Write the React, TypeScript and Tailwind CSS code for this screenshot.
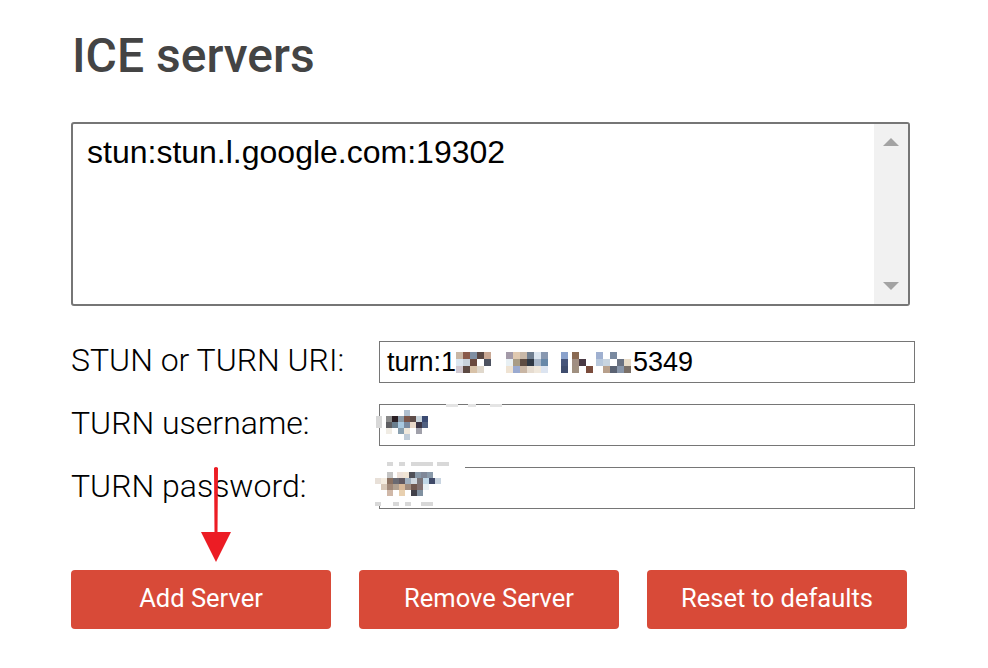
import React from "react";

type Cell = [number, number, number, number, string];

function Mosaic({ w, h, cells }: { w: number; h: number; cells: Cell[] }) {
  return (
    <svg width={w} height={h} viewBox={`0 0 ${w} ${h}`} className="block">
      {cells.map(([x, y, cw, ch, c], i) => (
        <rect key={i} x={x} y={y} width={cw} height={ch} fill={c} />
      ))}
    </svg>
  );
}

const uriCells: Cell[] = [
  [0, 0, 7, 7, "#c9b7a5"], [7, 0, 7, 7, "#8a5a4a"], [14, 7, 7, 7, "#6b4a3e"], [21, 0, 7, 7, "#5a4844"], [28, 0, 7, 7, "#c9a894"],
  [0, 7, 7, 7, "#dbe6f0"], [7, 7, 7, 7, "#c7d2dc"], [14, 0, 7, 7, "#7f8fa3"], [28, 7, 7, 7, "#4d5260"], [7, 14, 7, 7, "#5c4a43"], [14, 14, 7, 7, "#d8c2a8"],
  [21, 14, 7, 7, "#e0d8cc"], [0, 14, 7, 7, "#d0c8d0"],
  [50, 0, 7, 7, "#a39aa8"], [57, 0, 7, 7, "#e0c9b0"], [64, 0, 7, 7, "#c8b8a8"], [71, 0, 7, 7, "#6f7e90"], [78, 0, 7, 7, "#dce6f0"], [85, 0, 7, 7, "#8898b0"],
  [50, 7, 7, 7, "#e8f0f4"], [57, 7, 7, 7, "#a89c86"], [64, 7, 7, 7, "#5e4c42"], [71, 7, 7, 7, "#2f3844"], [78, 7, 7, 7, "#a8b6c8"], [85, 7, 7, 7, "#6888a8"],
  [50, 14, 7, 7, "#efe3d3"], [57, 14, 7, 7, "#9aaad0"], [64, 14, 7, 7, "#c9b6a4"], [71, 14, 7, 7, "#e6dcd0"], [78, 14, 7, 7, "#f0e8dc"], [85, 14, 7, 7, "#dce4f0"],
  [105, 0, 7, 7, "#8aa2cc"], [105, 7, 7, 7, "#46557a"], [105, 14, 7, 7, "#3f4d6e"],
  [116, 0, 7, 7, "#8a6a52"], [116, 7, 7, 7, "#a08e82"], [123, 7, 7, 7, "#4a3a44"], [130, 14, 7, 7, "#7a4c3c"], [116, 14, 7, 7, "#a09080"],
  [140, 0, 7, 7, "#9fb0d0"], [140, 7, 7, 7, "#b8c8dc"], [147, 7, 7, 7, "#c8d4e0"], [154, 0, 7, 7, "#7a8aa0"], [154, 14, 7, 7, "#5a6272"],
  [147, 14, 7, 7, "#b8a08c"], [161, 7, 7, 7, "#6a7282"], [161, 14, 7, 7, "#8896aa"], [168, 7, 7, 7, "#e8dcc8"], [168, 14, 7, 7, "#7a7068"],
];

const userCells: Cell[] = [
  [0, 12, 6, 12, "#d8d8d8"], [10, 12, 6, 6, "#8a8a8a"], [16, 12, 6, 6, "#2a1e24"], [22, 12, 6, 6, "#8a9aa8"], [28, 12, 6, 6, "#7a5448"],
  [34, 12, 6, 6, "#5e4c48"], [40, 12, 6, 6, "#c8d4dc"], [46, 12, 6, 6, "#3a4a72"], [10, 18, 6, 6, "#5e5e62"], [16, 18, 6, 6, "#6a7e8e"],
  [22, 18, 6, 6, "#a8c8e0"], [28, 18, 6, 6, "#7a8aa0"], [34, 18, 6, 6, "#e8d8c8"], [40, 18, 6, 6, "#3a3444"], [46, 18, 6, 6, "#506080"],
  [10, 24, 6, 6, "#f0ece4"], [22, 24, 6, 6, "#8aa0b0"], [28, 24, 6, 6, "#f0e8dc"], [40, 24, 6, 6, "#a0a0aa"], [28, 6, 6, 6, "#b0c0d0"],
  [28, 30, 6, 6, "#c0ccd8"], [70, 0, 12, 3, "#e4e4e4"], [92, 0, 8, 3, "#e4e4e4"], [114, 0, 12, 3, "#e4e4e4"],
];

const passCells: Cell[] = [
  [12, 0, 6, 4, "#d8d8d8"], [24, 0, 6, 4, "#d8d8d8"], [36, 0, 22, 4, "#d8d8d8"], [62, 0, 12, 4, "#d8d8d8"],
  [12, 10, 6, 6, "#c4c4c4"], [22, 10, 6, 6, "#ece0d8"], [28, 10, 6, 6, "#f0e4d4"], [34, 10, 6, 6, "#505058"], [40, 10, 6, 6, "#8898a8"],
  [46, 10, 6, 6, "#808898"], [52, 10, 6, 6, "#8a9aaa"], [0, 16, 6, 6, "#e8e0d8"], [6, 16, 6, 6, "#f4ece0"], [12, 16, 6, 6, "#8a7060"],
  [18, 16, 6, 6, "#6a6a72"], [24, 16, 6, 6, "#605860"], [30, 16, 6, 6, "#a0b0c0"], [36, 16, 6, 6, "#d0d8e0"], [42, 16, 6, 6, "#7a7478"],
  [48, 16, 6, 6, "#c0d8e8"], [54, 16, 6, 6, "#404a68"], [60, 16, 6, 6, "#c8d4e0"], [6, 22, 6, 6, "#d8c8b8"], [12, 22, 6, 6, "#a08878"],
  [18, 22, 6, 6, "#b0a090"], [24, 22, 6, 6, "#d8b898"], [30, 22, 6, 6, "#a08c80"], [36, 22, 6, 6, "#705850"], [42, 22, 6, 6, "#807070"],
  [48, 22, 6, 6, "#e8f0f4"], [12, 28, 6, 6, "#d0b8a8"], [24, 28, 6, 6, "#e8d0b0"], [36, 28, 6, 6, "#404048"], [42, 28, 6, 6, "#8090a0"],
  [0, 40, 6, 4, "#d8d8d8"], [18, 40, 6, 4, "#d8d8d8"], [30, 40, 6, 4, "#d8d8d8"], [46, 40, 12, 4, "#d8d8d8"],
];

export default function App() {
  return (
    <div className="relative w-[988px] h-[668px] bg-white overflow-hidden">
      <div className="pl-[71px] pt-[28px]">
        <h1 className="text-[48px] leading-[56px] font-medium text-[#444444] pl-[1px]" style={{ fontFamily: "Roboto, sans-serif" }}>
          ICE servers
        </h1>
        <div className="mt-[38px] w-[839px] h-[184px] border-2 border-[#767676] rounded-[3px] flex bg-white">
          <div className="flex-1 pl-[14px] pt-[10px] text-[32px] leading-[36px] text-black" style={{ fontFamily: "'Liberation Sans', Arial, sans-serif" }}>
            stun:stun.l.google.com:19302
          </div>
          <div className="w-[34px] bg-[#f1f1f1] flex flex-col items-center justify-between py-[14px]">
            <svg width="16" height="8" viewBox="0 0 16 8"><path d="M0 8 L8 0 L16 8 Z" fill="#a3a3a3" /></svg>
            <svg width="16" height="8" viewBox="0 0 16 8"><path d="M0 0 L16 0 L8 8 Z" fill="#a3a3a3" /></svg>
          </div>
        </div>

        <div className="mt-[35px] flex flex-col gap-[21px]" style={{ fontFamily: "Roboto, sans-serif" }}>
          <div className="flex items-center h-[42px]">
            <div className="w-[308px] text-[32px] leading-[40px] font-light text-black pb-[4px]">STUN or TURN URI:</div>
            <div className="w-[536px] h-[42px] border border-[#767676] flex items-center pl-[7px] text-[27px] text-black" style={{ fontFamily: "'Liberation Sans', Arial, sans-serif" }}>
              <span>turn:1</span>
              <Mosaic w={177} h={21} cells={uriCells} />
              <span>5349</span>
            </div>
          </div>
          <div className="flex items-center h-[42px]">
            <div className="w-[308px] text-[32px] leading-[40px] font-light text-black pb-[4px]">TURN username:</div>
            <div className="relative w-[536px] h-[42px] border border-[#767676] flex items-center">
              <div className="absolute left-[-4px] top-[-1px]">
                <Mosaic w={130} h={38} cells={userCells} />
              </div>
            </div>
          </div>
          <div className="flex items-center h-[42px]">
            <div className="w-[308px] text-[32px] leading-[40px] font-light text-black pb-[5px]">TURN password:</div>
            <div className="relative w-[536px] h-[42px] border border-[#767676]">
              <div className="absolute left-[-5px] top-[-6px] bg-white">
                <Mosaic w={90} h={44} cells={passCells} />
              </div>
            </div>
          </div>
        </div>

        <div className="mt-[61px] flex gap-[28px]" style={{ fontFamily: "Roboto, sans-serif" }}>
          {["Add Server", "Remove Server", "Reset to defaults"].map((t) => (
            <button key={t} className="w-[260px] h-[59px] bg-[#d84a38] rounded-[4px] text-white text-[25.5px] flex items-center justify-center pb-[3px]">
              {t}
            </button>
          ))}
        </div>
      </div>

      <svg className="absolute left-[196px] top-[464px]" width="40" height="100" viewBox="0 0 40 100">
        <path d="M18 4 Q20 2 22 4 L21.5 68 L35 68 L20 98 L5 68 L18.5 68 Z" fill="#ec1c24" />
      </svg>
    </div>
  );
}
